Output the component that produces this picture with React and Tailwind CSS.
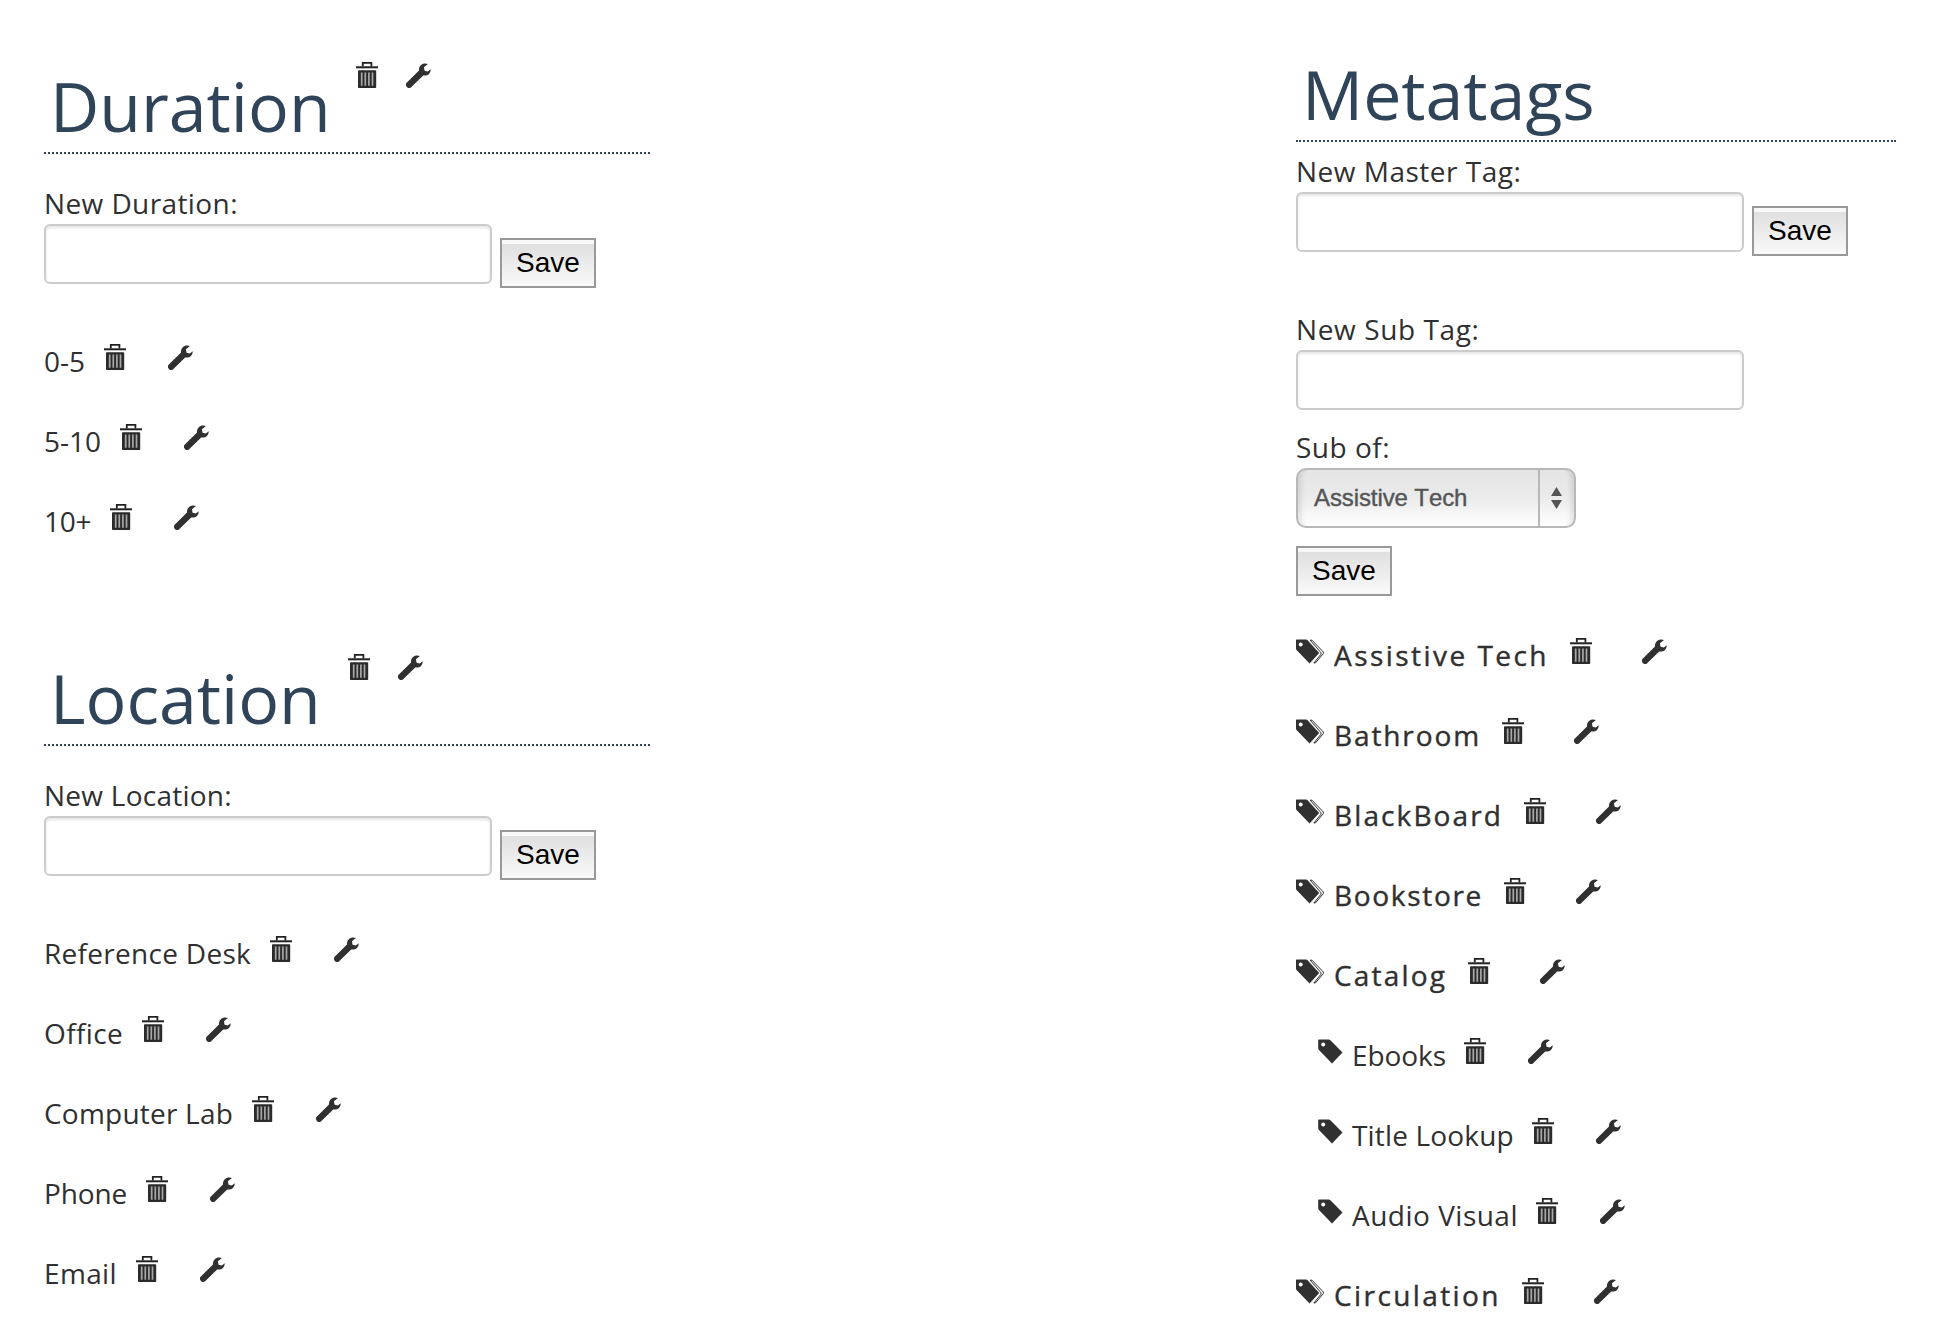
import React from "react";

function Trash({ className = "" }) {
  return (
    <svg className={`h-[26px] w-[22px] shrink-0 ${className}`} viewBox="0 0 22 26" fill="none">
      <path d="M6.800 4.500V.9h8.600v3.600" stroke="#222" strokeWidth="1.8" />
      <path d="M0 5.300h22" stroke="#222" strokeWidth="2" />
      <rect x="2" y="8.2" width="18.2" height="17.8" rx="0.8" fill="#2b2b2b" />
      <path d="M5.700 10.400v13.400M9.300 10.400v13.400M12.900 10.400v13.400M16.500 10.400v13.400" stroke="#a8a8a8" strokeWidth="1.7" />
    </svg>
  );
}

function Wrench({ className = "" }) {
  return (
    <svg className={`h-[25px] w-[25px] shrink-0 ${className}`} viewBox="0 0 25 25" fill="#303030">
      <path d="M22 1C17.300-.9 12.600 2.200 13 7.400L.9 19.500a3.100 3.100 0 0 0 4.500 4.500L17.200 12.400c4.200.8 7.600-2 7.500-6.200l-2.900 2.300-3.200-.8-.7-3.400Z" />
    </svg>
  );
}

function Tag() {
  return (
    <svg className="mt-[4px] h-[25px] w-[25px] shrink-0" viewBox="0 0 25 25" fill="#303030">
      <path fillRule="evenodd" d="M.8.6h9.800a2.500 2.500 0 0 1 1.800.7L24.500 13.600 14 24.400 1 11.100A3 3 0 0 1 .2 9V1.200A.6.6 0 0 1 .8.6ZM5.200 3.500a2 2 0 1 0 0 4 2 2 0 0 0 0-4Z" />
    </svg>
  );
}

function Tags() {
  return (
    <svg className="mt-[4px] h-[25px] w-[28px] shrink-0" viewBox="0 0 28 25" fill="#303030">
      <path fillRule="evenodd" d="M.6.6h9.200a2.500 2.500 0 0 1 1.800.7L23.200 14 13.600 24.400 1 11.600A3 3 0 0 1 0 9.500V1.200A.6.6 0 0 1 .6.6ZM4.700 3.500a2 2 0 1 0 0 4 2 2 0 0 0 0-4Z" />
      <path d="M14.200 1.200h1.800L27.400 13v1.600L19.300 24h-1.400L25 15.200v-1.400Z" fill="#fff" stroke="#303030" strokeWidth="1" />
    </svg>
  );
}

function Save({ className = "" }) {
  return (
    <button className={`block h-[50px] w-[96px] border-2 border-[#999] bg-[linear-gradient(#f8f8f8_0,#f8f8f8_4px,#dfdfdf_4px,#fafafa_100%)] font-['Liberation_Sans',sans-serif] text-[28px] leading-[46px] text-black ${className}`}>
      Save
    </button>
  );
}

function Input() {
  return <input className="block h-[60px] w-[448px] rounded-[6px] border-2 border-[#ccc] bg-white px-2 shadow-[inset_0_2px_3px_rgba(0,0,0,0.1)] outline-none" />;
}

function Label({ children, className = "" }) {
  return <label className={`block h-[41px] leading-[40px] ${className}`}>{children}</label>;
}

function Heading({ children }) {
  return <h1 className="pl-[6px] text-[68px] leading-[92px] text-[#2f4459]">{children}</h1>;
}

function Section({ title, items, labelClass, trashClass }) {
  return (
    <section className="h-[592px]">
      <header className="flex h-[154px] items-start border-b-2 border-dotted border-[#2f4459]">
        <div className="mt-[60px]"><Heading>{title}</Heading></div>
        <Trash className={`mt-[62px] ${trashClass}`} />
        <Wrench className="mt-[63px] ml-[28px]" />
      </header>
      <Label className={`mt-[29px] ${labelClass}`}>New {title}:</Label>
      <div className="flex gap-2">
        <Input />
        <Save className="mt-[14px]" />
      </div>
      <ul className="mt-[53px]">
        {items.map(([name, tracking]) => (
          <li key={name} className="flex h-20 items-start">
            <span className={`leading-[40px] ${tracking}`}>{name}</span>
            <Trash className="mt-[3px] ml-[19px]" />
            <Wrench className="mt-[4px] ml-[42px]" />
          </li>
        ))}
      </ul>
    </section>
  );
}

const durations = [
  ["0-5", "tracking-normal"],
  ["5-10", "tracking-normal"],
  ["10+", "tracking-[-0.3px]"],
];

const locations = [
  ["Reference Desk", "tracking-[0.29px]"],
  ["Office", "tracking-[0.36px]"],
  ["Computer Lab", "tracking-[0.22px]"],
  ["Phone", "tracking-[-0.16px]"],
  ["Email", "tracking-[0.36px]"],
];

const tags = [
  { name: "Assistive Tech", tracking: "tracking-[2.46px]" },
  { name: "Bathroom", tracking: "tracking-[1.89px]" },
  { name: "BlackBoard", tracking: "tracking-[2.11px]" },
  { name: "Bookstore", tracking: "tracking-[1.68px]" },
  { name: "Catalog", tracking: "tracking-[2.17px]" },
  { name: "Ebooks", tracking: "tracking-[-0.07px]", sub: true },
  { name: "Title Lookup", tracking: "tracking-[0.17px]", sub: true },
  { name: "Audio Visual", tracking: "tracking-[0.49px]", sub: true },
  { name: "Circulation", tracking: "tracking-[2.41px]" },
];

function TagRow({ name, tracking, sub }) {
  return sub ? (
    <li className="flex h-20 items-start pl-[22px]">
      <Tag />
      <span className={`ml-[9px] leading-[40px] ${tracking}`}>{name}</span>
      <Trash className="mt-[3px] ml-[18px]" />
      <Wrench className="mt-[4px] ml-[42px]" />
    </li>
  ) : (
    <li className="flex h-20 items-start">
      <Tags />
      <span className={`ml-[10px] leading-[40px] [-webkit-text-stroke:0.4px_#303030] ${tracking}`}>{name}</span>
      <Trash className="mt-[3px] ml-[21px]" />
      <Wrench className="mt-[4px] ml-[50px]" />
    </li>
  );
}

export default function App() {
  return (
    <main className="flex h-[1322px] justify-between overflow-hidden bg-white pr-[60px] pl-[44px] font-['Open_Sans',sans-serif] text-[28px] text-[#303030] [font-kerning:none]">
      <div className="w-[606px]">
        <Section title="Duration" items={durations} labelClass="tracking-[0.4px]" trashClass="ml-[25px]" />
        <Section title="Location" items={locations} labelClass="tracking-[0.25px]" trashClass="ml-[27px]" />
      </div>
      <section className="w-[600px]">
        <header className="h-[142px] border-b-2 border-dotted border-[#2f4459] pt-[48px]">
          <Heading>Metatags</Heading>
        </header>
        <Label className="mt-[9px] tracking-[0.5px]">New Master Tag:</Label>
        <div className="flex gap-2">
          <Input />
          <Save className="mt-[14px]" />
        </div>
        <Label className="mt-[53px] tracking-[0.6px]">New Sub Tag:</Label>
        <Input />
        <Label className="mt-[17px] tracking-[0.5px]">Sub of:</Label>
        <div className="flex h-[60px] w-[280px] overflow-hidden rounded-[10px] border-2 border-[#b8b8b8] bg-[linear-gradient(#e4e4e4,#ebebeb_50%,#fff)] shadow-[inset_8px_0_5px_-5px_rgba(0,0,0,0.1),inset_-8px_0_5px_-5px_rgba(0,0,0,0.1)]">
          <span className="w-[242px] border-r-2 border-[#b8b8b8] pl-[16px] font-['Liberation_Sans',sans-serif] text-[24px] leading-[55px] tracking-[-0.1px] text-[#555] [-webkit-text-stroke:0.4px_#555]">Assistive Tech</span>
          <svg className="mt-[17px] ml-[11px] h-[22px] w-[11px]" viewBox="0 0 11 22" fill="#555">
            <path d="M5.500 0 11 9H0ZM0 13h11l-5.500 9Z" />
          </svg>
        </div>
        <Save className="mt-[18px]" />
        <ul className="mt-[39px]">
          {tags.map((tag) => <TagRow key={tag.name} {...tag} />)}
        </ul>
      </section>
    </main>
  );
}
